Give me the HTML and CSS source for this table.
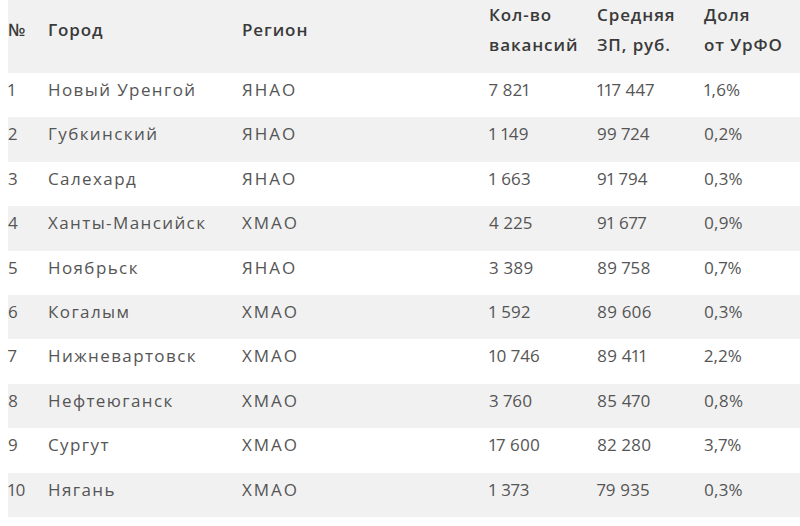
FILE: index.html
```html
<!DOCTYPE html>
<html lang="ru">
<head>
<meta charset="utf-8">
<link rel="stylesheet" href="styles.css">
</head>
<body>
<table class="tbl">
  <colgroup>
    <col class="c1"><col class="c2"><col class="c3"><col class="c4"><col class="c5"><col class="c6">
  </colgroup>
  <thead>
    <tr>
      <th>№</th><th class="txt">Город</th><th class="txt">Регион</th><th>Кол-во<br>вакансий</th><th>Средняя<br>ЗП, руб.</th><th>Доля<br>от УрФО</th>
    </tr>
  </thead>
  <tbody>
    <tr><td>1</td><td class="txt">Новый Уренгой</td><td class="reg">ЯНАО</td><td>7 821</td><td>117 447</td><td>1,6%</td></tr>
    <tr><td>2</td><td class="txt">Губкинский</td><td class="reg">ЯНАО</td><td>1 149</td><td>99 724</td><td>0,2%</td></tr>
    <tr><td>3</td><td class="txt">Салехард</td><td class="reg">ЯНАО</td><td>1 663</td><td>91 794</td><td>0,3%</td></tr>
    <tr><td>4</td><td class="txt">Ханты-Мансийск</td><td class="reg">ХМАО</td><td>4 225</td><td>91 677</td><td>0,9%</td></tr>
    <tr><td>5</td><td class="txt">Ноябрьск</td><td class="reg">ЯНАО</td><td>3 389</td><td>89 758</td><td>0,7%</td></tr>
    <tr><td>6</td><td class="txt">Когалым</td><td class="reg">ХМАО</td><td>1 592</td><td>89 606</td><td>0,3%</td></tr>
    <tr><td>7</td><td class="txt">Нижневартовск</td><td class="reg">ХМАО</td><td>10 746</td><td>89 411</td><td>2,2%</td></tr>
    <tr><td>8</td><td class="txt">Нефтеюганск</td><td class="reg">ХМАО</td><td>3 760</td><td>85 470</td><td>0,8%</td></tr>
    <tr><td>9</td><td class="txt">Сургут</td><td class="reg">ХМАО</td><td>17 600</td><td>82 280</td><td>3,7%</td></tr>
    <tr><td>10</td><td class="txt">Нягань</td><td class="reg">ХМАО</td><td>1 373</td><td>79 935</td><td>0,3%</td></tr>
  </tbody>
</table>
</body>
</html>
```

FILE: styles.css
```css
html, body {
  margin: 0;
  padding: 0;
  background: #ffffff;
}
body {
  padding-left: 8px;
  font-family: "Open Sans", "Noto Sans", sans-serif;
}
.tbl {
  width: 792px;
  border-collapse: collapse;
  table-layout: fixed;
  font-variant-numeric: proportional-nums;
}
.c1 { width: 40px; }
.c2 { width: 194px; }
.c3 { width: 247px; }
.c4 { width: 108px; }
.c5 { width: 107px; }
.c6 { width: 96px; }
.tbl thead tr { height: 73px; }
.tbl tbody tr { height: 44.4px; }
.tbl th {
  padding: 0 0 13px 0;
  text-align: left;
  vertical-align: middle;
  font-weight: 600;
  font-size: 17px;
  line-height: 30px;
  color: #3a3a3a;
  background: #f1f1f1;
  letter-spacing: 0.9px;
}
.tbl td {
  padding: 7px 0 0 0;
  font-size: 17px;
  line-height: 20px;
  color: #555555;
  vertical-align: top;
  letter-spacing: 0.2px;
}
.tbl td.txt { letter-spacing: 1.4px; }
.tbl td.reg { letter-spacing: 2px; }
.tbl tbody tr:nth-child(even) td {
  background: #f1f1f1;
}
```
